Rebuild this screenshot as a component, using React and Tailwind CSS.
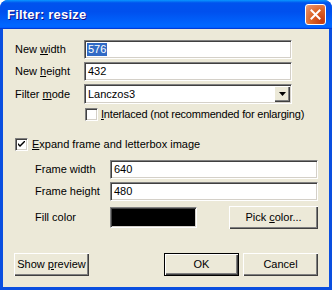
import React, { useState } from 'react';

const sunken =
  'border border-t-[#808080] border-l-[#808080] border-b-white border-r-white shadow-[inset_1px_1px_0_#404040,inset_-1px_-1px_0_#d4d0c8] bg-white';
const raised =
  'bg-[#ece9d8] shadow-[inset_1px_1px_0_#ffffff,inset_-1px_-1px_0_#404040,inset_-2px_-2px_0_#808080]';

const TextField = ({ value, selected, className = '' }) => (
  <div className={`${sunken} h-[19px] flex items-center pl-[2px] ${className}`}>
    <span className={selected ? 'bg-[#316ac5] text-white px-[1px] leading-[13px]' : 'px-[1px]'}>{value}</span>
  </div>
);

const Checkbox = ({ checked }) => (
  <div className={`${sunken} w-[13px] h-[13px] shrink-0 flex items-center justify-center`}>
    {checked && (
      <svg width="7" height="7" viewBox="0 0 7 7">
        <path d="M0 2 L0 4 L2 6 L7 1 L7 -1 L2 4 Z" fill="#000" />
      </svg>
    )}
  </div>
);

const Button = ({ children, isDefault, className = '' }) => (
  <button
    type="button"
    className={`h-[23px] flex items-center justify-center ${raised} ${
      isDefault ? 'border border-black' : ''
    } ${className}`}
  >
    <span>{children}</span>
  </button>
);

const App = () => {
  const [expand] = useState(true);

  return (
    <div className="w-[332px] h-[290px] flex flex-col bg-[#0a4fe0] rounded-t-[8px] overflow-hidden font-['Liberation_Sans',Arial,sans-serif] text-[11px] text-black">
      {/* title bar */}
      <div className="h-[29px] shrink-0 flex items-center justify-between pl-[7px] pr-[6px] bg-[linear-gradient(180deg,#0997ff,#0053ee_10%,#0050ee_40%,#0066ff_86%,#0066ff_92%,#005bff_95%,#003dd7_97%,#003dd7)]">
        <span className="text-white font-bold text-[13px] tracking-[0.2px] [text-shadow:1px_1px_0_#0f1089]">
          Filter: resize
        </span>
        <div className="w-[21px] h-[21px] rounded-[3px] border border-white flex items-center justify-center bg-[radial-gradient(circle_at_85%_85%,#c53a10_0,#dc6527_50%,#e58a62_85%,#f0a888_100%)]">
          <svg width="11" height="11" viewBox="0 0 11 11">
            <path d="M1.5 1.5 L9.5 9.5 M9.5 1.5 L1.5 9.5" stroke="#fff" strokeWidth="2" strokeLinecap="square" />
          </svg>
        </div>
      </div>

      {/* client */}
      <div className="flex-1 mx-[3px] mb-[3px] bg-[#ece9d8] flex flex-col pl-[12px] pr-[11px]">
        <div className="mt-[11px] flex flex-col gap-[3px]">
          <div className="flex items-center">
            <span className="w-[69px]">
              New <span className="underline">w</span>idth
            </span>
            <TextField value="576" selected className="w-[208px]" />
          </div>
          <div className="flex items-center">
            <span className="w-[69px]">
              New <span className="underline">h</span>eight
            </span>
            <TextField value="432" className="w-[208px]" />
          </div>
          <div className="flex items-center">
            <span className="w-[69px]">
              Filter <span className="underline">m</span>ode
            </span>
            <div className={`${sunken} w-[208px] h-[20px] flex items-center justify-between pl-[3px] pr-[1px]`}>
              <span>Lanczos3</span>
              <div className={`w-[16px] h-[16px] flex items-center justify-center ${raised}`}>
                <svg width="7" height="4" viewBox="0 0 7 4">
                  <path d="M0 0 H7 L3.5 4 Z" fill="#000" />
                </svg>
              </div>
            </div>
          </div>
        </div>

        <div className="mt-[4px] ml-[70px] flex items-center gap-[3px] h-[13px]">
          <Checkbox />
          <span className="tracking-[-0.2px]">
            <span className="underline">I</span>nterlaced (not recommended for enlarging)
          </span>
        </div>

        <div className="mt-[17px] flex items-center gap-[4px] h-[13px]">
          <Checkbox checked={expand} />
          <span>
            <span className="underline">E</span>xpand frame and letterbox image
          </span>
        </div>

        <div className="mt-[9px] pl-[20px] flex flex-col gap-[3px]">
          <div className="flex items-center">
            <span className="w-[75px]">Frame width</span>
            <TextField value="640" className="w-[208px]" />
          </div>
          <div className="flex items-center">
            <span className="w-[75px]">Frame height</span>
            <TextField value="480" className="w-[208px]" />
          </div>
          <div className="mt-[2px] flex items-center">
            <span className="w-[75px]">Fill color</span>
            <div className={`${sunken} w-[87px] h-[21px] !bg-black`} />
            <Button className="ml-auto w-[89px]">
              Pick <span className="underline">c</span>olor...
            </Button>
          </div>
        </div>

        <div className="mt-auto mb-[11px] -ml-[1px] flex items-center">
          <Button className="w-[75px]">
            Show <span className="underline">p</span>review
          </Button>
          <div className="ml-auto flex gap-[4px]">
            <Button isDefault className="w-[75px]">
              OK
            </Button>
            <Button className="w-[75px]">Cancel</Button>
          </div>
        </div>
      </div>
    </div>
  );
};

export default App;
